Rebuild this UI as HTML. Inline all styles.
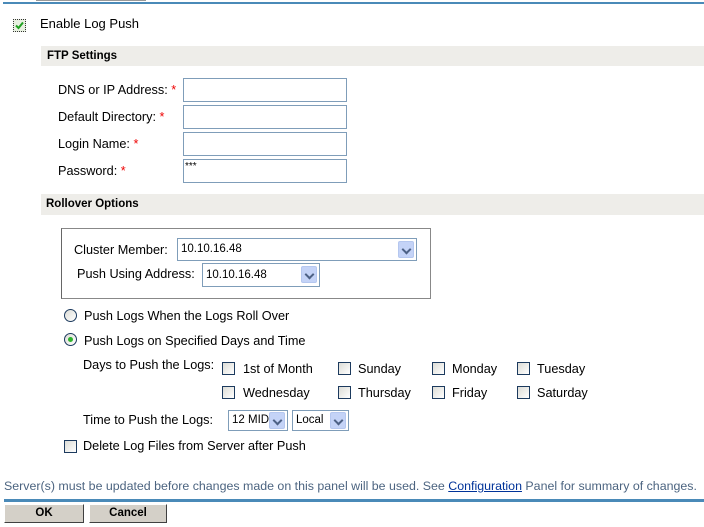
<!DOCTYPE html>
<html><head><meta charset="utf-8"><style>
*{margin:0;padding:0;box-sizing:border-box}
body{width:704px;height:527px;overflow:hidden;background:#fff;font-family:"Liberation Sans",sans-serif;font-size:12.7px;color:#000;position:relative}
.a{position:absolute;white-space:nowrap;line-height:14px}
.band{position:absolute;left:41px;width:663px;background:#eeede9;font-weight:bold;font-size:11.5px;padding-left:6px}
.in{position:absolute;border:1px solid #7f9db9;background:#fff;width:164px;height:24px}
.req{color:#e00}
.cb{position:absolute;width:13px;height:13px;border:1px solid #1c3a5e;background:linear-gradient(135deg,#dcdcd6,#fff)}
.sel{position:absolute;border:1px solid #7f9db9;background:#fff;font-size:11.5px;padding-left:3px;line-height:20px;overflow:hidden;white-space:nowrap}
.arr{position:absolute;right:2px;top:2px;width:16px;height:17px;background:#c4d3f7;border:1px solid #b5c7ef;border-radius:2px}
.arr:after{content:"";position:absolute;left:4px;top:4px;width:5px;height:5px;border-right:2px solid #4d6185;border-bottom:2px solid #4d6185;transform:rotate(45deg)}
.rad{position:absolute;width:13px;height:13px;border:1px solid #1c3a5e;border-radius:50%;background:linear-gradient(135deg,#dcdcd6,#fff)}
.btn{position:absolute;top:504px;height:19px;background:#d4d0c8;border:1px solid #fff;border-right-color:#404040;border-bottom-color:#404040;font-weight:bold;font-size:11.5px;text-align:center;line-height:17px}
</style></head><body>
<div style="position:absolute;left:3px;top:2px;width:701px;height:2px;background:#4a8ab8"></div>
<div style="position:absolute;left:36px;top:0;width:110px;height:1px;background:#000;opacity:.4"></div>
<div class="cb" style="left:13px;top:19px;border:1px dotted #333;background:#e8f0e0"><svg width="11" height="11" style="position:absolute;left:0;top:0"><path d="M2 5.5 L4.5 8 L9 2.5" stroke="#21a121" stroke-width="2" fill="none"/></svg></div>
<div class="a" style="left:40px;top:17px;font-size:13px">Enable Log Push</div>
<div class="band" style="top:46px;height:20px;line-height:20px">FTP Settings</div>
<div class="a" style="left:58px;top:83px">DNS or IP Address: <span class="req">*</span></div>
<div class="a" style="left:58px;top:110px">Default Directory: <span class="req">*</span></div>
<div class="a" style="left:58px;top:137px">Login Name: <span class="req">*</span></div>
<div class="a" style="left:58px;top:164px">Password: <span class="req">*</span></div>
<div class="in" style="left:183px;top:78px"></div>
<div class="in" style="left:183px;top:105px"></div>
<div class="in" style="left:183px;top:132px"></div>
<div class="in" style="left:183px;top:159px"><span style="position:absolute;left:1px;top:2px;font-size:10px;line-height:10px">***</span></div>
<div class="band" style="top:194px;height:21px;line-height:21px;padding-left:5px">Rollover Options</div>
<div style="position:absolute;left:61px;top:228px;width:370px;height:71px;border:1px solid #888;border-left-color:#666"></div>
<div class="a" style="left:74px;top:243px">Cluster Member:</div>
<div class="sel" style="left:177px;top:238px;width:240px;height:23px">10.10.16.48<div class="arr"></div></div>
<div class="a" style="left:77px;top:267px">Push Using Address:</div>
<div class="sel" style="left:202px;top:263px;width:118px;height:24px;line-height:22px">10.10.16.48<div class="arr"></div></div>
<div class="rad" style="left:64px;top:309px"></div>
<div class="a" style="left:84px;top:309px">Push Logs When the Logs Roll Over</div>
<div class="rad" style="left:64px;top:333px"><div style="position:absolute;left:3px;top:3px;width:5px;height:5px;border-radius:50%;background:#2db32d"></div></div>
<div class="a" style="left:84px;top:334px">Push Logs on Specified Days and Time</div>
<div class="a" style="left:83px;top:358px">Days to Push the Logs:</div>
<div class="cb" style="left:222px;top:362px"></div><div class="a" style="left:243px;top:362px">1st of Month</div>
<div class="cb" style="left:338px;top:362px"></div><div class="a" style="left:358px;top:362px">Sunday</div>
<div class="cb" style="left:432px;top:362px"></div><div class="a" style="left:452px;top:362px">Monday</div>
<div class="cb" style="left:517px;top:362px"></div><div class="a" style="left:537px;top:362px">Tuesday</div>
<div class="cb" style="left:222px;top:386px"></div><div class="a" style="left:243px;top:386px">Wednesday</div>
<div class="cb" style="left:338px;top:386px"></div><div class="a" style="left:358px;top:386px">Thursday</div>
<div class="cb" style="left:432px;top:386px"></div><div class="a" style="left:452px;top:386px">Friday</div>
<div class="cb" style="left:517px;top:386px"></div><div class="a" style="left:537px;top:386px">Saturday</div>
<div class="a" style="left:83px;top:413px">Time to Push the Logs:</div>
<div class="sel" style="left:228px;top:410px;width:60px;height:21px;line-height:19px">12 MID<div class="arr" style="top:1px;height:17px"></div></div>
<div class="sel" style="left:292px;top:410px;width:57px;height:21px;line-height:19px">Local<div class="arr" style="top:1px;height:17px"></div></div>
<div class="cb" style="left:64px;top:440px"></div>
<div class="a" style="left:83px;top:439px">Delete Log Files from Server after Push</div>
<div class="a" style="left:4px;top:479px;color:#4c6480;font-size:12.4px">Server(s) must be updated before changes made on this panel will be used. See <span style="color:#003399;text-decoration:underline">Configuration</span> Panel for summary of changes.</div>
<div style="position:absolute;left:4px;top:499px;width:700px;height:3px;background:#4a8ab8"></div>
<div class="btn" style="left:4px;width:80px">OK</div>
<div class="btn" style="left:89px;width:78px">Cancel</div>
</body></html>
